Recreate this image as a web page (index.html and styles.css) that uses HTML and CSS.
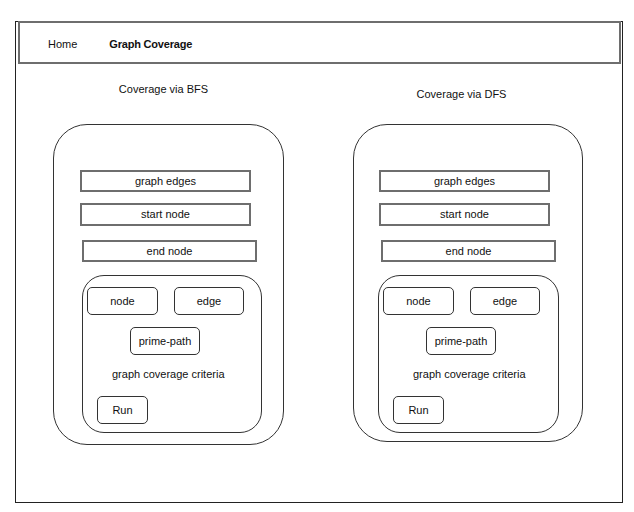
FILE: index.html
```html
<!DOCTYPE html>
<html lang="en">
<head>
  <meta charset="UTF-8" />
  <title>Graph Coverage</title>
  <link rel="stylesheet" href="styles.css">
</head>
<body>
  <div class="frame">
    <header class="topbar">
      <a class="nav-link">Home</a>
      <a class="nav-link active">Graph Coverage</a>
    </header>

    <main class="columns">
      <section class="column">
        <div class="title title-bfs">Coverage via BFS</div>
        <div class="card">
          <div class="field">graph edges</div>
          <div class="field field-tall">start node</div>
          <div class="field field-end">end node</div>
          <div class="criteria">
            <div class="btn-row">
              <div class="btn">node</div>
              <div class="btn btn-edge">edge</div>
            </div>
            <div class="btn btn-prime">prime-path</div>
            <p class="criteria-label">graph coverage criteria</p>
            <div class="btn btn-run">Run</div>
          </div>
        </div>
      </section>

      <section class="column">
        <div class="title title-dfs">Coverage via DFS</div>
        <div class="card card-dfs">
          <div class="field">graph edges</div>
          <div class="field field-tall">start node</div>
          <div class="field field-end">end node</div>
          <div class="criteria">
            <div class="btn-row">
              <div class="btn">node</div>
              <div class="btn btn-edge">edge</div>
            </div>
            <div class="btn btn-prime">prime-path</div>
            <p class="criteria-label">graph coverage criteria</p>
            <div class="btn btn-run">Run</div>
          </div>
        </div>
      </section>
    </main>
  </div>
</body>
</html>
```

FILE: styles.css
```css
* {
  box-sizing: border-box;
}

body {
  margin: 0;
  background: #fff;
  color: #111;
  font-family: "Liberation Sans", Arial, sans-serif;
  font-size: 11px;
  line-height: 13px;
}

.frame {
  margin: 21px 0 0 15px;
  width: 608px;
  height: 482px;
  border: 1px solid #222;
}

.topbar {
  display: flex;
  align-items: center;
  gap: 32px;
  height: 43px;
  margin: -1px 1px 0 2px;
  padding: 3px 0 0 28px;
  border: 2px solid #6e6e6e;
}

.nav-link.active {
  font-weight: 700;
  letter-spacing: -0.2px;
}

.columns {
  display: flex;
  gap: 69px;
  padding-left: 37px;
}

.column {
  width: 231px;
}

.title {
  height: 60px;
  padding-right: 10px;
  text-align: center;
}

.title-bfs {
  padding-top: 19px;
}

.title-dfs {
  padding-top: 24px;
  padding-right: 14px;
}

.card {
  display: flex;
  flex-direction: column;
  align-items: flex-start;
  width: 231px;
  height: 321px;
  padding: 45px 0 0 26px;
  border: 1px solid #333;
  border-radius: 34px;
}

.card-dfs {
  width: 230px;
  height: 318px;
  padding-left: 25px;
}

.field {
  width: 171px;
  height: 22px;
  margin-bottom: 11px;
  border: 2px solid #6e6e6e;
  text-align: center;
  line-height: 18px;
}

.field-tall {
  height: 23px;
  margin-bottom: 14px;
  line-height: 19px;
}

.field-end {
  width: 175px;
  margin-left: 2px;
  margin-bottom: 13px;
}

.criteria {
  display: flex;
  flex-direction: column;
  align-items: flex-start;
  width: 180px;
  height: 158px;
  margin-left: 2px;
  padding: 11px 0 0 4px;
  border: 1px solid #333;
  border-radius: 22px;
}

.card-dfs .criteria {
  width: 181px;
  margin-left: -1px;
}

.btn-row {
  display: flex;
  gap: 16px;
}

.btn {
  width: 71px;
  height: 28px;
  border: 1px solid #333;
  border-radius: 5px;
  text-align: center;
  line-height: 26px;
}

.btn-edge {
  width: 70px;
}

.btn-prime {
  width: 70px;
  margin: 12px 0 0 43px;
}

.criteria-label {
  margin: 13px 0 0 25px;
}

.card-dfs .criteria-label {
  margin-left: 30px;
}

.btn-run {
  width: 51px;
  margin: 15px 0 0 10px;
}
```
